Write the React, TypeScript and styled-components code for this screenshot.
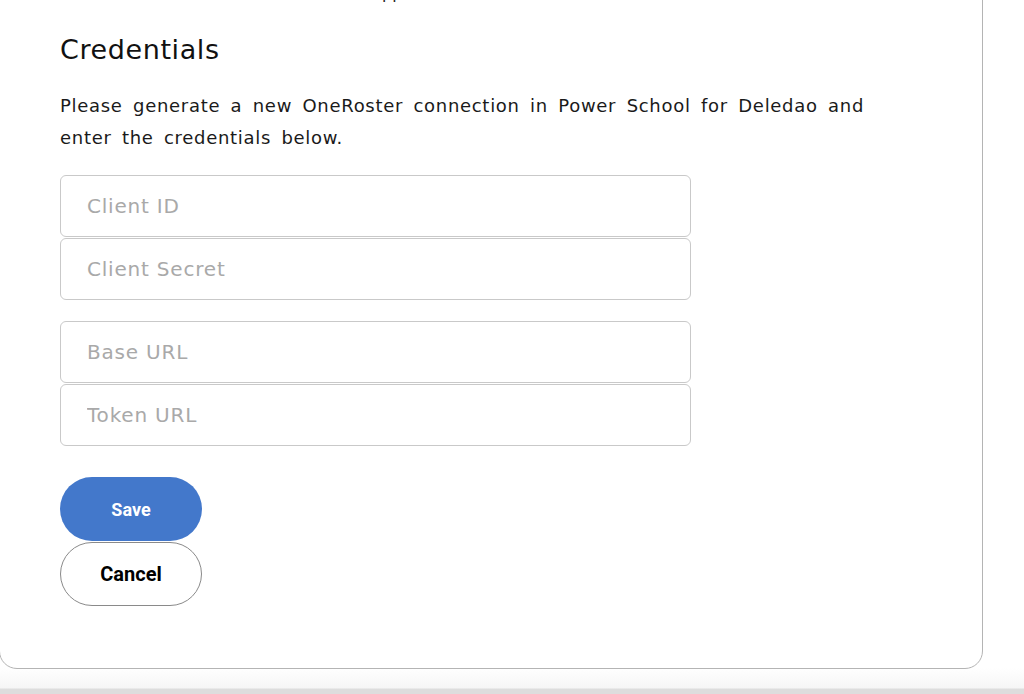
import { FC } from "react";
import styled, { createGlobalStyle } from "styled-components";

const FONT = `"DejaVu Sans", "Open Sans", sans-serif`

const GlobalStyle = createGlobalStyle`
  html, body {
    margin: 0;
    padding: 0;
    height: 100%;
    overflow: hidden;
  }
  body {
    background: linear-gradient(to bottom, #ffffff 0, #ffffff 668px, #f6f6f6 688px, #dddddd 689px, #dddddd 694px);
    font-family: ${FONT};
    color: #1a1a1a;
  }
`

const Page = styled.div`
  width: 1024px;
  height: 694px;
  overflow: hidden;
`

const Card = styled.section`
  box-sizing: border-box;
  width: 984px;
  height: 693px;
  margin-top: -24px;
  margin-left: -1px;
  background: #ffffff;
  border: 1.5px solid #b4b4b4;
  border-radius: 0 0 18px 18px;
  padding: 0 0 0 60px;
  display: flex;
  flex-direction: column;
`

// 画面上部で切れている前のセクションの文字
const CutText = styled.p`
  margin: 7px 0 0 241px;
  line-height: 20px;
  font-size: 16px;
  color: #222;
`

const Title = styled.h2`
  margin: 28px 0 0;
  font-size: 27px;
  font-weight: 400;
  letter-spacing: 0.6px;
  line-height: 36px;
  color: #111;
`

const Description = styled.p`
  margin: 22px 0 0;
  width: 820px;
  font-size: 18px;
  letter-spacing: 0.7px;
  word-spacing: 4px;
  line-height: 32px;
  color: #1a1a1a;
`

const FieldGroup = styled.div<{ $top: number }>`
  display: flex;
  flex-direction: column;
  gap: 1px;
  width: 631px;
  margin-top: ${(p) => p.$top}px;
`

const Input = styled.input`
  box-sizing: border-box;
  height: 62px;
  width: 100%;
  border: 1.5px solid #c9c9c9;
  border-radius: 6px;
  padding: 0 26px;
  font-family: ${FONT};
  font-size: 20px;
  letter-spacing: 0.8px;
  color: #333;
  outline: none;
  background: #fff;
  &::placeholder {
    color: #a9a9a9;
  }
`

const Actions = styled.div`
  display: flex;
  flex-direction: column;
  gap: 1px;
  margin-top: 31px;
`

const Button = styled.button<{ $primary?: boolean }>`
  box-sizing: border-box;
  width: 142px;
  height: 64px;
  border-radius: 32px;
  font-family: Roboto, "Liberation Sans", sans-serif;
  font-weight: 700;
  font-size: ${(p) => (p.$primary ? "18px" : "20px")};
  cursor: pointer;
  background: ${(p) => (p.$primary ? "#4378cb" : "#ffffff")};
  color: ${(p) => (p.$primary ? "#ffffff" : "#000000")};
  border: ${(p) => (p.$primary ? "none" : "1.5px solid #8a8a8a")};
`

const App: FC = () => {
  return (
    <Page>
      <GlobalStyle />
      <Card>
        <CutText>Deledao app</CutText>
        <Title>Credentials</Title>
        <Description>
          Please generate a new OneRoster connection in Power School for Deledao and enter the credentials below.
        </Description>
        <FieldGroup $top={21}>
          <Input placeholder="Client ID" />
          <Input placeholder="Client Secret" />
        </FieldGroup>
        <FieldGroup $top={21}>
          <Input placeholder="Base URL" />
          <Input placeholder="Token URL" />
        </FieldGroup>
        <Actions>
          <Button $primary>Save</Button>
          <Button>Cancel</Button>
        </Actions>
      </Card>
    </Page>
  )
}

export default App
